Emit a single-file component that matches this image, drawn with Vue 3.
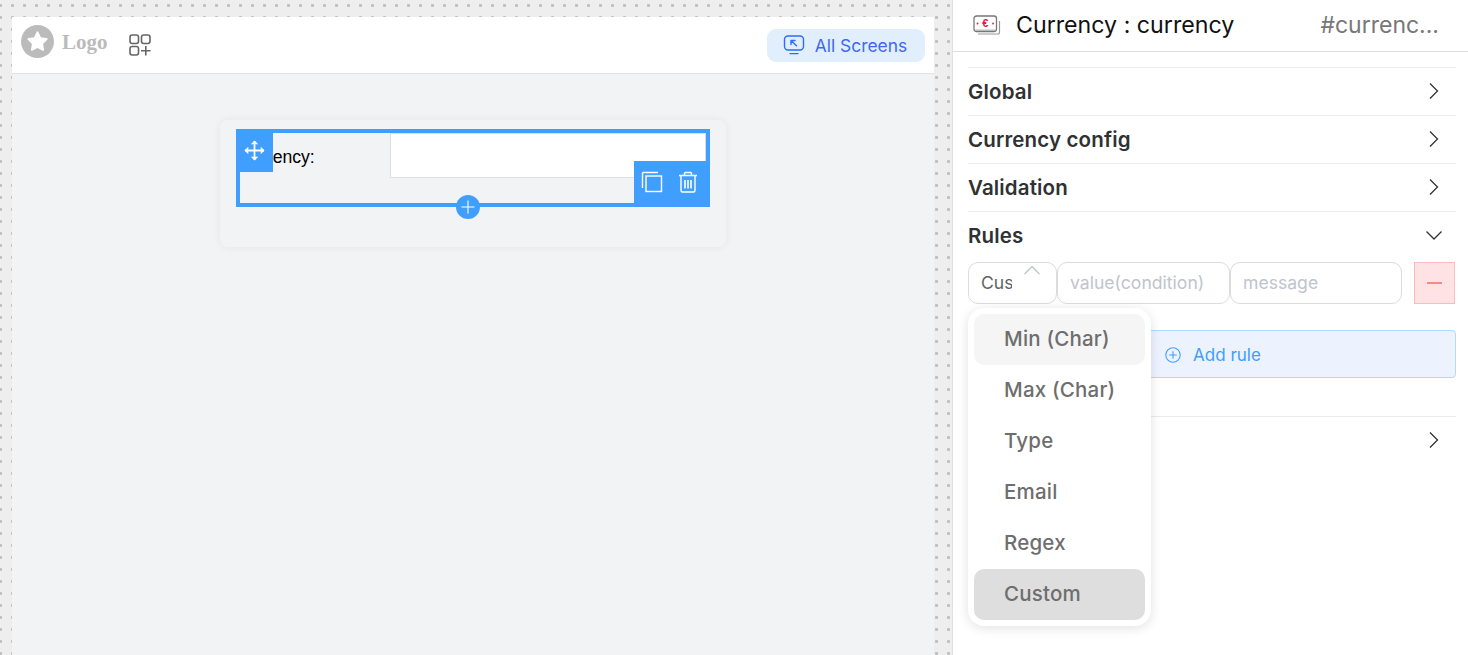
<script setup>
const sections = ['Global', 'Currency config', 'Validation']
const options = [
  { label: 'Min (Char)', cls: 'hover' },
  { label: 'Max (Char)', cls: '' },
  { label: 'Type', cls: '' },
  { label: 'Email', cls: '' },
  { label: 'Regex', cls: '' },
  { label: 'Custom', cls: 'selected' }
]
</script>

<template>
  <div class="root">
    <main class="canvas">
      <div class="screen">
        <header class="topbar">
          <div class="logo">
            <svg width="33" height="33" viewBox="0 0 34 34">
              <circle cx="17" cy="17" r="17" fill="#bbb" />
              <path d="M17 7.600l2.900 6 6.500.9-4.700 4.600 1.100 6.500-5.800-3.100-5.800 3.100 1.100-6.500-4.700-4.600 6.500-.9z" fill="#fff" stroke="#fff" stroke-width="2" stroke-linejoin="round" />
            </svg>
            <span class="logo-text">Logo</span>
          </div>
          <svg class="apps" width="24" height="24" viewBox="0 0 24 24" fill="none" stroke="#666" stroke-width="1.600">
            <rect x="2" y="2" width="8.500" height="8.500" rx="2.200" />
            <rect x="13.500" y="2" width="8.500" height="8.500" rx="2.200" />
            <rect x="2" y="13.500" width="8.500" height="8.500" rx="2.200" />
            <path d="M13 17.800h9.500M17.800 13v9.500" />
          </svg>
          <button class="screens">
            <svg width="22" height="20" viewBox="0 0 22 20" fill="none" stroke="#2f6bff" stroke-width="1.400" stroke-linecap="round" stroke-linejoin="round">
              <rect x="1.500" y="1" width="19" height="14" rx="3.500" />
              <path d="M7 18.600h8M8 5.500v4M8 5.500h4M8.200 5.700l5.300 5" />
            </svg>
            <span>All Screens</span>
          </button>
        </header>
        <div class="stage">
          <div class="form-card">
            <div class="selected-field">
              <span class="field-label">Currency:</span>
              <div class="field-input"></div>
              <div class="handle">
                <svg width="21" height="21" viewBox="0 0 20 20" fill="none" stroke="#fff" stroke-width="1.700">
                  <path d="M10 1v18M1 10h18" />
                  <path d="M7.600 3.600L10 1.200l2.400 2.400zM7.600 16.400l2.400 2.400 2.400-2.400zM3.600 7.600L1.200 10l2.400 2.400zM16.400 7.600l2.400 2.400-2.400 2.400z" fill="#fff" stroke-width="1" />
                </svg>
              </div>
              <div class="actions">
                <svg width="22" height="22" viewBox="0 0 22 22" fill="none" stroke="#fff" stroke-width="1.400">
                  <path d="M1.500 17V2.200a.7.7 0 0 1 .7-.7H17" />
                  <rect x="5" y="5" width="15.500" height="15.500" />
                </svg>
                <svg width="20" height="22" viewBox="0 0 20 22" fill="none" stroke="#fff" stroke-width="1.400">
                  <path d="M1 4.500h18M6.500 4.200V2.500a1 1 0 0 1 1-1h5a1 1 0 0 1 1 1v1.700" />
                  <path d="M3 5v14.500a1.500 1.500 0 0 0 1.500 1.500h11a1.500 1.500 0 0 0 1.500-1.500V5" />
                  <path d="M7 9v8.500M10 9v8.500M13 9v8.500" stroke-width="1.600" />
                </svg>
              </div>
              <div class="add-circle">
                <svg width="14" height="14" viewBox="0 0 14 14" stroke="#fff" stroke-width="1.100"><path d="M7 0.500v13M0.500 7h13" /></svg>
              </div>
            </div>
          </div>
        </div>
      </div>
    </main>

    <aside class="panel">
      <header class="panel-head">
        <svg class="money" width="28" height="22" viewBox="0 0 28 22" fill="none">
          <path d="M26.500 7v11.500a1.500 1.500 0 0 1-1.500 1.500H5" stroke="#999" stroke-width="1.200" />
          <rect x="1" y="2" width="22.500" height="15.500" rx="2.500" fill="#fff" stroke="#777" stroke-width="1.300" />
          <rect x="2" y="15.500" width="20.500" height="1.500" fill="#bbb" />
          <text x="12.200" y="13" text-anchor="middle" class="euro">€</text>
          <circle cx="4.500" cy="9.500" r=".9" fill="#f0104f" />
          <circle cx="20" cy="9.500" r=".9" fill="#f0104f" />
        </svg>
        <span class="panel-title">Currency : currency</span>
        <span class="panel-id">#currenc...</span>
      </header>

      <div class="sections">
        <section v-for="s in sections" :key="s" class="section">
          <div class="section-head">
            <span>{{ s }}</span>
            <svg width="18" height="18" viewBox="0 0 18 18" fill="none" stroke="#333" stroke-width="1.300"><path d="M5 1.500L12.500 9 5 16.500" /></svg>
          </div>
        </section>

        <section class="section">
          <div class="section-head">
            <span>Rules</span>
            <svg width="18" height="18" viewBox="0 0 18 18" fill="none" stroke="#333" stroke-width="1.300"><path d="M1.500 5.500L9 13l7.500-7.500" /></svg>
          </div>
          <div class="rules-body">
            <div class="rule-row">
              <div class="select-box">
                <span class="select-value">Custom</span>
                <svg width="18" height="12" viewBox="0 0 18 12" fill="none" stroke="#c0c4cc" stroke-width="1.300"><path d="M1.500 10L9 2.500 16.500 10" /></svg>
              </div>
              <div class="text-box value">value(condition)</div>
              <div class="text-box message">message</div>
              <button class="remove"><span></span></button>
            </div>
            <button class="add-rule">
              <svg width="16" height="16" viewBox="0 0 16 16" fill="none" stroke="#409eff" stroke-width="1.100">
                <circle cx="8" cy="8" r="7.200" /><path d="M8 4.200v7.600M4.200 8h7.600" />
              </svg>
              <span>Add rule</span>
            </button>
            <ul class="dropdown">
              <li v-for="o in options" :key="o.label" :class="o.cls"><span>{{ o.label }}</span></li>
            </ul>
          </div>
        </section>

        <section class="section">
          <div class="section-head end">
            <svg width="18" height="18" viewBox="0 0 18 18" fill="none" stroke="#333" stroke-width="1.300"><path d="M5 1.500L12.500 9 5 16.500" /></svg>
          </div>
        </section>
      </div>
    </aside>
  </div>
</template>

<style scoped>
.root {
  display: flex;
  width: 1468px;
  height: 655px;
  overflow: hidden;
  font-family: Inter, "Liberation Sans", sans-serif;
  background: #fff;
}
.canvas {
  width: 952px;
  flex: none;
  box-sizing: border-box;
  padding: 17px 18px 0 12px;
  background-color: #eeeeee;
  background-image: radial-gradient(circle at 1.500px 1.500px, #c0c0c0 1.300px, transparent 1.900px);
  background-size: 12px 12px;
  background-position: -1px 4px;
}
.screen {
  height: 100%;
  display: flex;
  flex-direction: column;
  background: #f2f3f5;
}
.topbar {
  height: 57px;
  flex: none;
  box-sizing: border-box;
  display: flex;
  align-items: center;
  padding: 0 9px;
  background: #fff;
  border-bottom: 1px solid #e1e1e1;
}
.logo {
  display: flex;
  align-items: center;
  gap: 8px;
  margin-bottom: 8px;
}
.logo-text {
  font: bold 21px "Liberation Serif", serif;
  color: #bbb;
  margin-top: 2px;
}
.apps { margin-left: 20px; }
.screens {
  margin-left: auto;
  height: 33px;
  width: 158px;
  box-sizing: border-box;
  display: flex;
  align-items: center;
  justify-content: center;
  gap: 10px;
  padding: 0 2px 0 0;
  border: 0;
  border-radius: 9px;
  background: #e1effc;
  color: #3f68f5;
  font: 400 17.400px Inter, sans-serif;
}
.stage {
  flex: 1;
  padding: 46px 0 0 208px;
}
.form-card {
  width: 506px;
  height: 127px;
  box-sizing: border-box;
  padding: 9px 16px;
  background: #f2f3f5;
  border-radius: 8px;
  box-shadow: 0 0 10px rgba(0, 0, 0, 0.06);
}
.selected-field {
  position: relative;
  box-sizing: border-box;
  width: 474px;
  height: 78px;
  border: 4px solid #409eff;
  display: flex;
  align-items: flex-start;
}
.field-label {
  width: 150px;
  height: 45px;
  box-sizing: border-box;
  text-indent: -1.500px;
  white-space: nowrap;
  font: 17.600px/48px "Liberation Sans", sans-serif;
  color: #000;
}
.field-input {
  flex: 1;
  height: 45px;
  box-sizing: border-box;
  background: #fff;
  border: 1px solid #dcdfe6;
}
.handle {
  position: absolute;
  left: -4px;
  top: -4px;
  width: 37px;
  height: 43px;
  background: #409eff;
  display: flex;
  align-items: center;
  justify-content: center;
}
.actions {
  position: absolute;
  right: -4px;
  bottom: -4px;
  width: 76px;
  height: 46px;
  box-sizing: border-box;
  padding: 0 12px 4px 7px;
  background: #409eff;
  display: flex;
  align-items: center;
  justify-content: space-between;
}
.add-circle {
  position: absolute;
  left: 216px;
  bottom: -16px;
  width: 24px;
  height: 24px;
  border-radius: 50%;
  background: #409eff;
  display: flex;
  align-items: center;
  justify-content: center;
}
.panel {
  flex: 1;
  box-sizing: border-box;
  border-left: 1px solid #e0e0e0;
  background: #fff;
}
.panel-head {
  height: 52px;
  box-sizing: border-box;
  display: flex;
  align-items: center;
  padding: 0 29px 2px 20px;
  border-bottom: 1px solid #dedede;
}
.euro {
  font: bold 11px "Liberation Sans", sans-serif;
  fill: #f0104f;
}
.panel-title {
  margin-left: 15px;
  font-size: 23.200px;
  color: #111;
}
.panel-id {
  margin-left: auto;
  font-size: 23px;
  color: #777;
  white-space: nowrap;
}
.sections {
  padding: 15px 12px 0 15px;
}
.section {
  border-top: 1px solid #ebebeb;
}
.section-head {
  height: 47px;
  box-sizing: border-box;
  display: flex;
  align-items: center;
  justify-content: space-between;
  padding: 0 13px 2px 0;
  font-size: 20.500px;
  letter-spacing: 0.15px;
  font-weight: 600;
  color: #303133;
}
.section-head span { margin-top: 2px; }
.section-head.end { justify-content: flex-end; }
.rules-body {
  position: relative;
  height: 157px;
  padding-top: 3px;
  box-sizing: border-box;
}
.rule-row {
  display: flex;
  height: 42px;
  font-size: 17.600px;
}
.select-box, .text-box {
  box-sizing: border-box;
  height: 42px;
  display: flex;
  align-items: center;
  border: 1px solid #dcdcdc;
  border-radius: 10px;
  background: #fff;
  padding: 0 0 2px 12px;
}
.select-box {
  width: 89px;
  position: relative;
}
.select-box svg {
  position: absolute;
  right: 15px;
  top: 1px;
}
.select-value {
  width: 31px;
  overflow: hidden;
  white-space: nowrap;
  color: #606266;
}
.text-box { color: #c0c4cc; }
.value { width: 173px; }
.message { width: 172px; }
.remove {
  margin-left: 12px;
  width: 41px;
  height: 42px;
  box-sizing: border-box;
  padding: 0;
  background: #ffe2e4;
  border: 1px solid #fcbcbc;
  display: flex;
  align-items: center;
  justify-content: center;
}
.remove span {
  width: 15px;
  height: 1.500px;
  background: #f78989;
}
.add-rule {
  margin-top: 26px;
  width: 100%;
  height: 48px;
  box-sizing: border-box;
  display: flex;
  align-items: center;
  justify-content: center;
  gap: 12px;
  padding: 2px 0 0 2px;
  background: #ecf3fe;
  border: 1px solid #b3d8ff;
  border-radius: 4px;
  color: #409eff;
  font: 400 17px Inter, sans-serif;
}
.dropdown {
  position: absolute;
  left: 0;
  top: 49px;
  width: 183px;
  margin: 0;
  padding: 6px;
  box-sizing: border-box;
  list-style: none;
  background: #fff;
  border-radius: 16px;
  box-shadow: 0 2px 12px rgba(0, 0, 0, 0.12);
}
.dropdown li {
  height: 51px;
  box-sizing: border-box;
  display: flex;
  align-items: center;
  padding: 0 0 2px 30px;
  border-radius: 10px;
  font-size: 20.500px;
  letter-spacing: 0.2px;
  font-weight: 500;
  color: #6e6e6e;
}
.dropdown li.hover { background: #f5f5f5; }
.dropdown li.selected { background: #dedede; }
</style>
